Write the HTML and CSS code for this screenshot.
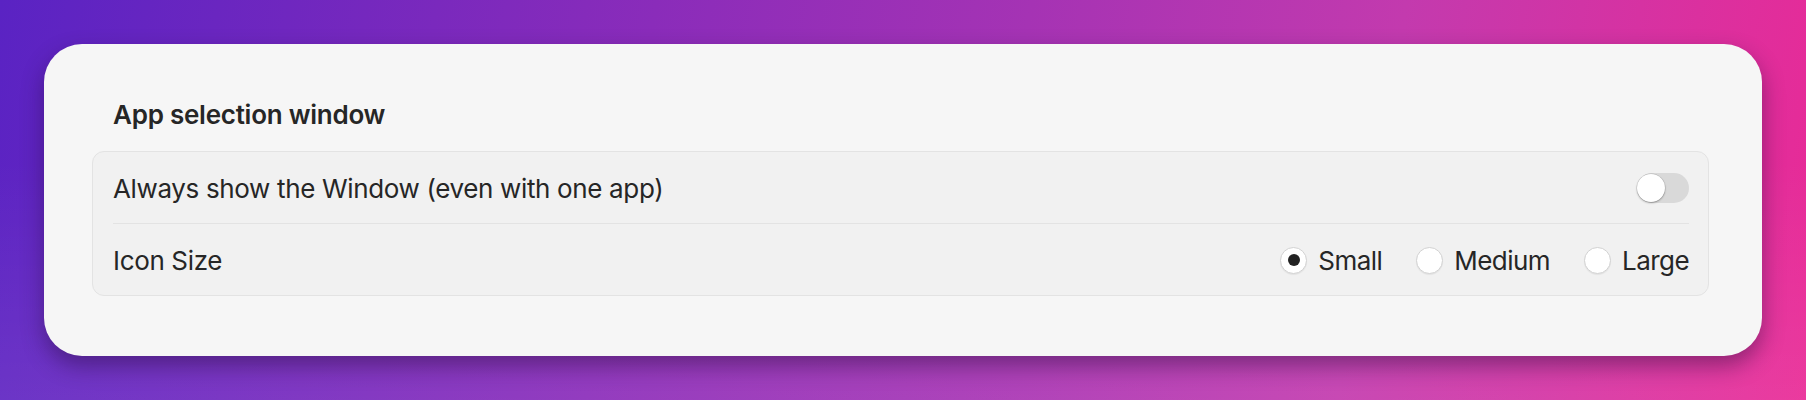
FILE: index.html
```html
<!DOCTYPE html>
<html>
<head>
    <title>Settings</title>
    <link rel="stylesheet" href="styles.css">
</head>
<body>
    <div class="panel">
        <h2 class="section-title">App selection window</h2>

        <div class="group">
            <!-- always show -->
            <div class="row">
                <span class="label">Always show the Window (even with one app)</span>
                <label class="switch">
                    <input type="checkbox">
                    <span class="knob"></span>
                </label>
            </div>

            <!-- icon size -->
            <div class="row">
                <span class="label">Icon Size</span>
                <div class="radios">
                    <label class="radio checked"><span class="dot"></span>Small</label>
                    <label class="radio"><span class="dot"></span>Medium</label>
                    <label class="radio"><span class="dot"></span>Large</label>
                </div>
            </div>
        </div>
    </div>
</body>
</html>
```

FILE: styles.css
```css
:root {
    --text: #262626;
    --panel: #f6f6f6;
    --group: #f1f1f1;
    --line: #e3e3e3;
}
html, body {
    height: 100%;
}
body {
    margin: 0;
    padding: 44px;
    box-sizing: border-box;
    font-family: 'Inter', 'Liberation Sans', sans-serif;
    color: var(--text);
    background:
        linear-gradient(to bottom, rgba(255,255,255,0) 40%, rgba(255,255,255,0.08) 100%),
        linear-gradient(100deg, #5a23c3 0%, #8a2cba 35%, #a533b4 55%, #c33aae 75%, #e92a96 100%);
    overflow: hidden;
}
.panel {
    background: var(--panel);
    border-radius: 38px;
    padding: 55px 53px 60px 48px;
    box-shadow: 0 10px 22px rgba(40, 10, 60, 0.45);
}
.section-title {
    margin: 0 0 20px;
    padding-left: 21px;
    font-size: 26px;
    line-height: 32px;
    font-weight: 600;
    letter-spacing: -0.25px;
}
.group {
    background: var(--group);
    border: 1px solid var(--line);
    border-radius: 12px;
    padding: 0 19px 0 20px;
}
.row {
    display: flex;
    align-items: center;
    justify-content: space-between;
    height: 71px;
}
.row + .row {
    border-top: 1px solid var(--line);
}
.label {
    font-size: 26px;
    letter-spacing: -0.35px;
    padding-top: 1px;
}
.switch {
    position: relative;
    width: 52px;
    height: 30px;
    border-radius: 15px;
    background: #d9d9d9;
    display: block;
}
.switch input {
    display: none;
}
.knob {
    position: absolute;
    left: 0;
    top: 1px;
    width: 28px;
    height: 28px;
    border-radius: 50%;
    background: #fff;
    box-shadow: 0 1px 2px rgba(0,0,0,0.3), 0 0 0 0.5px rgba(0,0,0,0.15);
}
.radios {
    display: flex;
    gap: 34px;
}
.radio {
    display: flex;
    align-items: center;
    gap: 11px;
    font-size: 26px;
    letter-spacing: -0.55px;
    padding-top: 1px;
}
.dot {
    width: 27px;
    height: 27px;
    box-sizing: border-box;
    border-radius: 50%;
    background: #fff;
    border: 1px solid #d2d2d2;
    box-shadow: 0 1px 1px rgba(0,0,0,0.06);
    display: flex;
    align-items: center;
    justify-content: center;
}
.radio.checked .dot::after {
    content: "";
    width: 12px;
    height: 12px;
    border-radius: 50%;
    background: #222;
}
```
